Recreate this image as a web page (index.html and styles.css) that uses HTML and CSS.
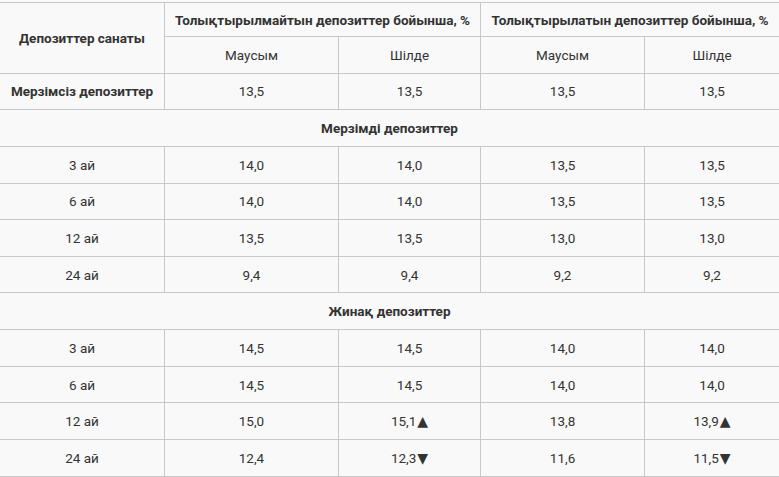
FILE: index.html
```html
<!DOCTYPE html>
<html lang="kk">
<head>
<meta charset="utf-8">
<title>Депозиттер</title>
<link rel="stylesheet" href="styles.css">
</head>
<body>
<table class="rates">
  <colgroup>
    <col class="c1"><col class="c2"><col class="c3"><col class="c4"><col class="c5">
  </colgroup>
  <thead>
    <tr class="h1">
      <th rowspan="2">Депозиттер санаты</th>
      <th colspan="2">Толықтырылмайтын депозиттер бойынша, %</th>
      <th colspan="2">Толықтырылатын депозиттер бойынша, %</th>
    </tr>
    <tr>
      <td>Маусым</td><td>Шілде</td><td>Маусым</td><td>Шілде</td>
    </tr>
  </thead>
  <tbody>
    <tr><th>Мерзімсіз депозиттер</th><td>13,5</td><td>13,5</td><td>13,5</td><td>13,5</td></tr>
    <tr><th colspan="5">Мерзімді депозиттер</th></tr>
    <tr><td>3 ай</td><td>14,0</td><td>14,0</td><td>13,5</td><td>13,5</td></tr>
    <tr><td>6 ай</td><td>14,0</td><td>14,0</td><td>13,5</td><td>13,5</td></tr>
    <tr><td>12 ай</td><td>13,5</td><td>13,5</td><td>13,0</td><td>13,0</td></tr>
    <tr><td>24 ай</td><td>9,4</td><td>9,4</td><td>9,2</td><td>9,2</td></tr>
    <tr><th colspan="5">Жинақ депозиттер</th></tr>
    <tr><td>3 ай</td><td>14,5</td><td>14,5</td><td>14,0</td><td>14,0</td></tr>
    <tr><td>6 ай</td><td>14,5</td><td>14,5</td><td>14,0</td><td>14,0</td></tr>
    <tr><td>12 ай</td><td>15,0</td><td>15,1<span class="arr">▲</span></td><td>13,8</td><td>13,9<span class="arr">▲</span></td></tr>
    <tr><td>24 ай</td><td>12,4</td><td>12,3<span class="arr">▼</span></td><td>11,6</td><td>11,5<span class="arr">▼</span></td></tr>
  </tbody>
</table>
</body>
</html>
```
FILE: styles.css
```css
html, body {
  margin: 0;
  padding: 0;
  background: #f9f9f9;
}
body {
  font-family: Roboto, "Noto Sans", sans-serif;
  font-size: 13.5px;
  color: #333;
  overflow: hidden;
}
.rates {
  border-collapse: collapse;
  table-layout: fixed;
  width: 780px;
  margin: 2px 0 0 -1px;
  background: #f9f9f9;
}
.c1 { width: 165px; }
.c2 { width: 174px; }
.c3 { width: 142px; }
.c4 { width: 164px; }
.c5 { width: 135px; }
.rates th,
.rates td {
  border: 1px solid #c8c8c8;
  text-align: center;
  vertical-align: middle;
  padding: 0 4px;
  height: 36.65px;
  box-sizing: border-box;
  white-space: nowrap;
}
.rates tr.h1 th {
  height: 34px;
}
.rates th {
  font-weight: 700;
}
.arr {
  font-family: "DejaVu Sans", sans-serif;
  font-size: 14px;
  margin-left: 1px;
}
```
